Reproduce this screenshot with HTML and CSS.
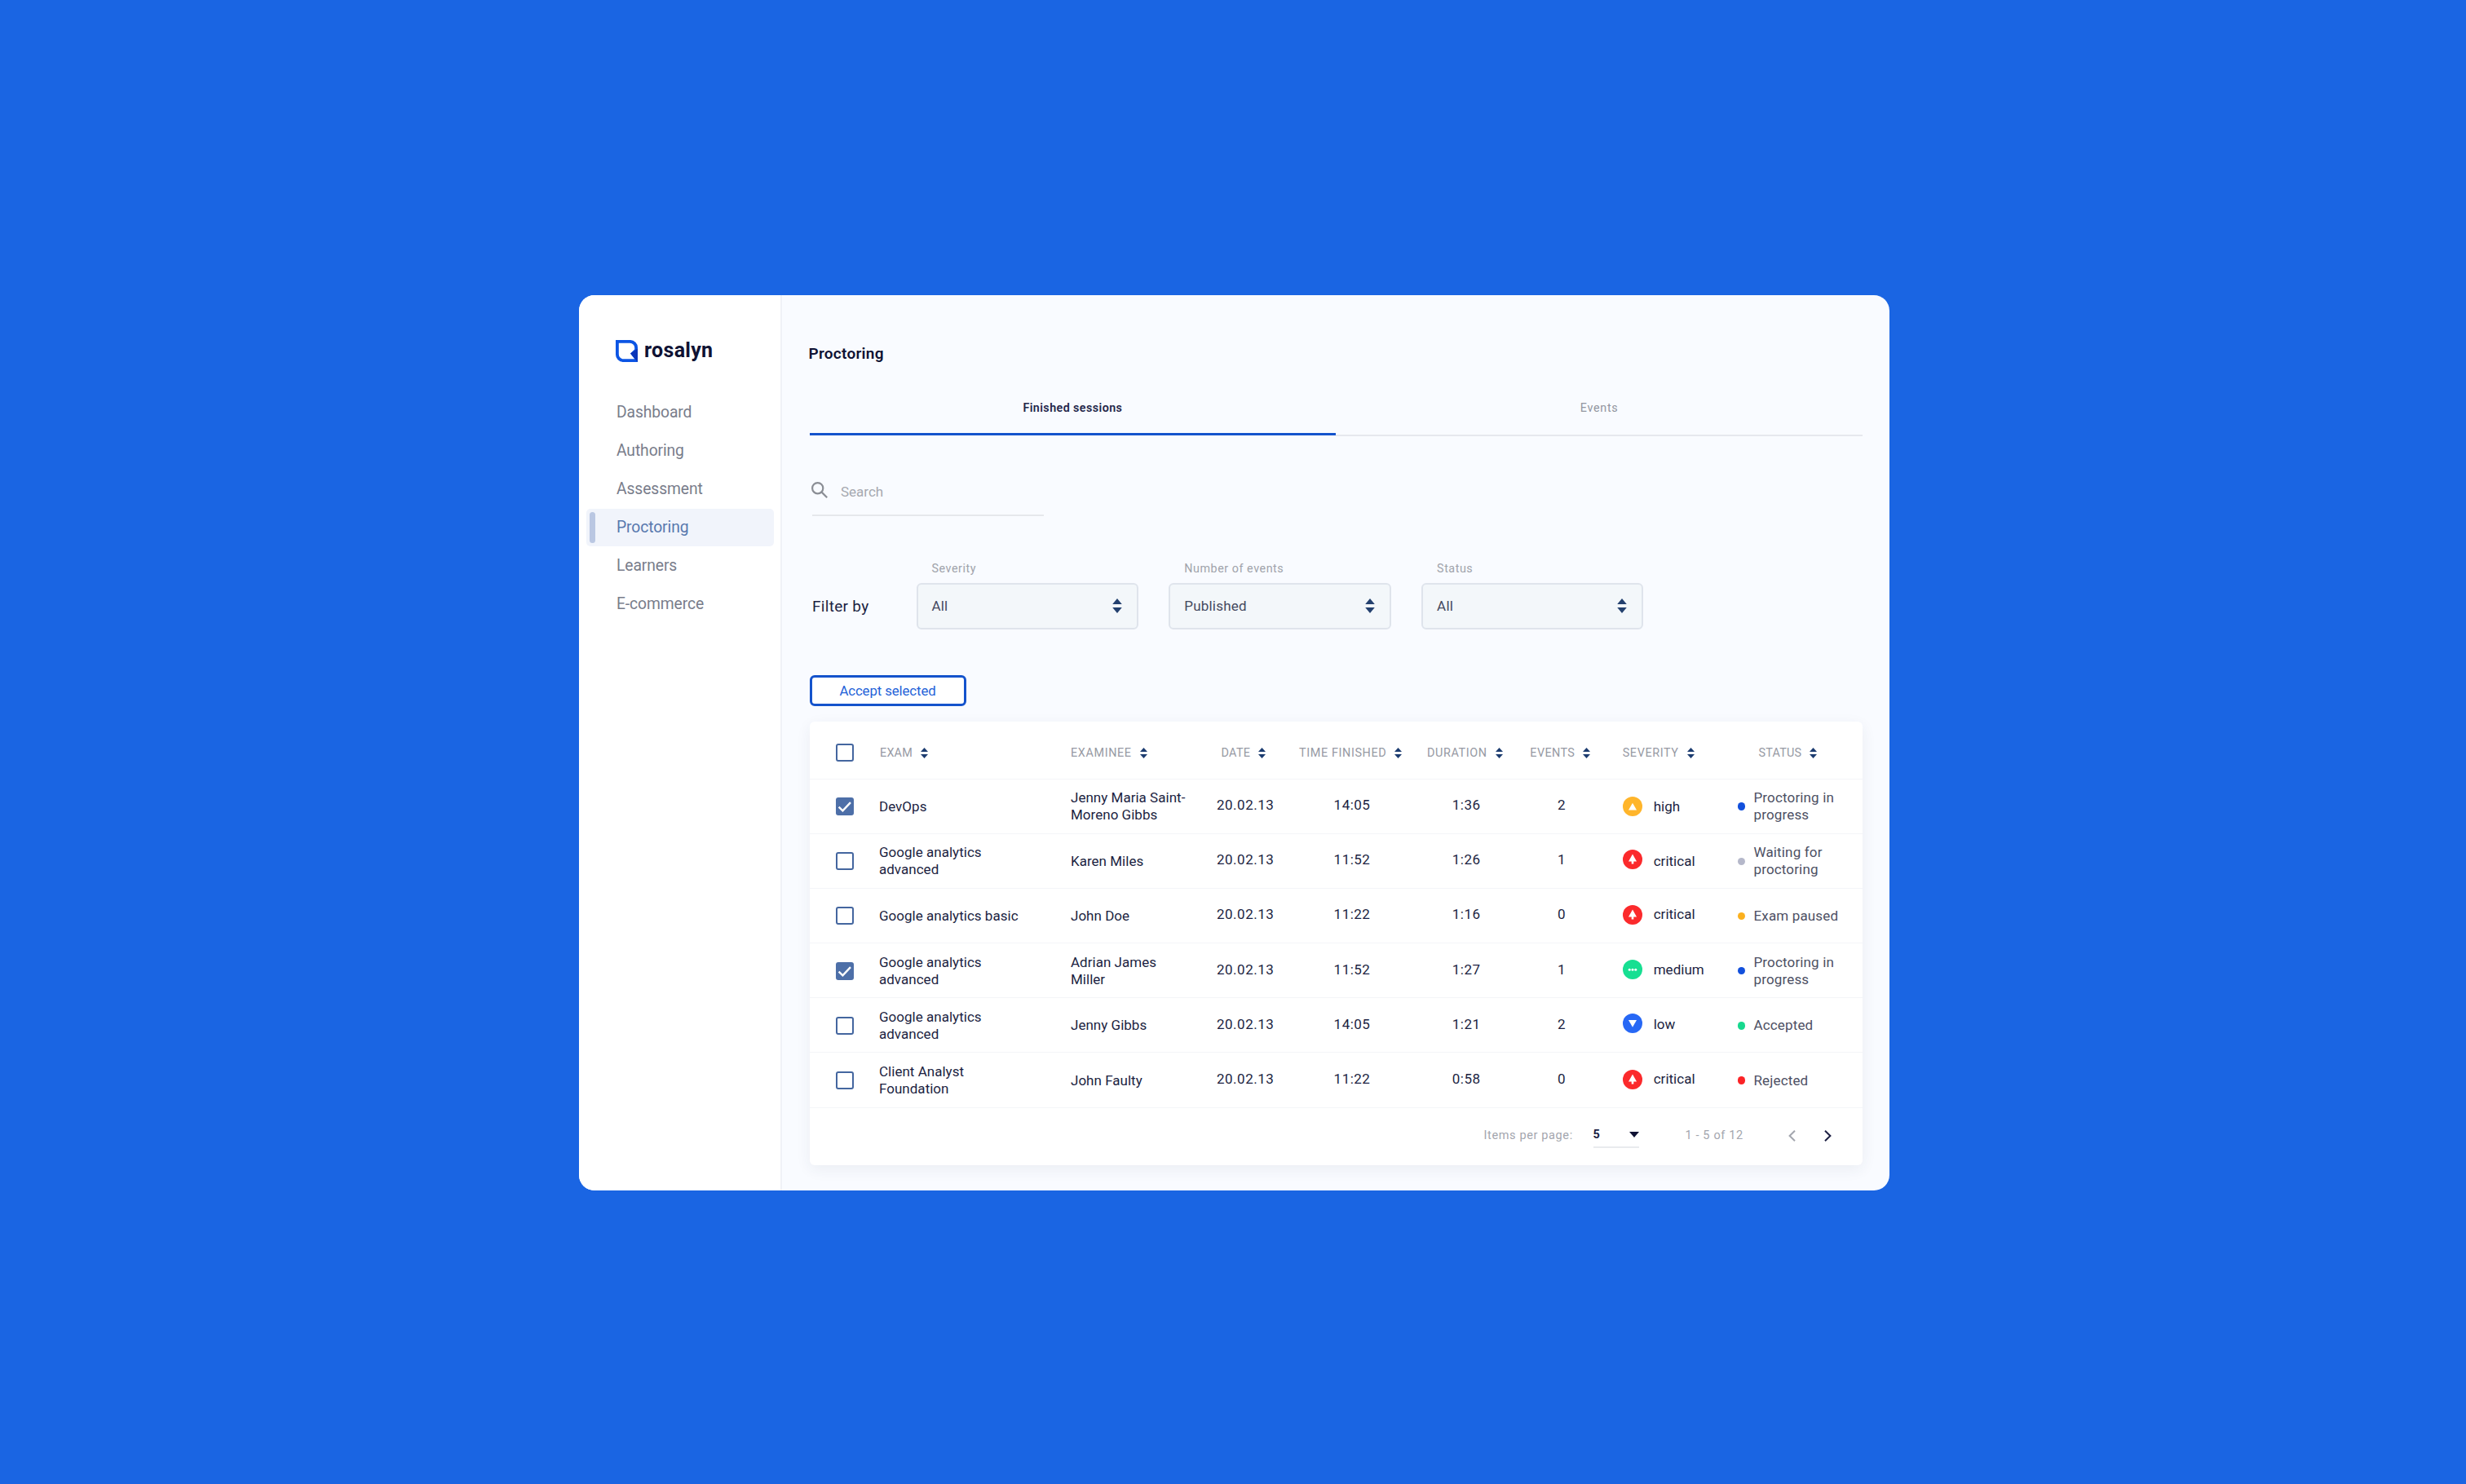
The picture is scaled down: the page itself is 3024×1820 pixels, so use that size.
FILE: index.html
```html
<!DOCTYPE html>
<html lang="en">
<head>
<meta charset="utf-8">
<title>Proctoring - rosalyn</title>
<link rel="stylesheet" href="styles.css">
</head>
<body>
<svg class="defs" width="0" height="0">
  <symbol id="sort" viewBox="0 0 9 13"><path d="M4.5 0 9 5H0zM4.5 13 0 8h9z"/></symbol>
  <symbol id="updown" viewBox="0 0 12 18"><path d="M6 0 11.8 7H.2zM6 18 .2 11h11.6z"/></symbol>
  <symbol id="check" viewBox="0 0 22 22"><path d="M3.6 11.6 8.4 16.3 18 6.2" fill="none" stroke="#fff" stroke-width="2.4"/></symbol>
  <symbol id="high" viewBox="0 0 24 24"><circle cx="12" cy="12" r="12" fill="#ffb52b"/><path d="M12 7.7 17 16.4H7z" fill="#fff"/></symbol>
  <symbol id="critical" viewBox="0 0 24 24"><circle cx="12" cy="12" r="12" fill="#fb2a2c"/><path d="M12 5.6 17 14.6H13.3V17.4H10.7V14.6H7z" fill="#fff"/></symbol>
  <symbol id="medium" viewBox="0 0 24 24"><circle cx="12" cy="12" r="12" fill="#17df92"/><g fill="#fff"><circle cx="8.2" cy="12.2" r="1.5"/><circle cx="12" cy="12.2" r="1.5"/><circle cx="15.8" cy="12.2" r="1.5"/></g></symbol>
  <symbol id="low" viewBox="0 0 24 24"><circle cx="12" cy="12" r="12" fill="#2768f5"/><path d="M7 8H17L12 16.8z" fill="#fff"/></symbol>
</svg>
<div class="window">
  <aside class="sidebar">
    <div class="brand">
      <svg class="logo" viewBox="0 0 27 27"><path fill="#0c55e4" fill-rule="evenodd" d="M0 0H18A9 9 0 0 1 27 9V27H9A9 9 0 0 1 0 18ZM3.8 3.8V17.5A5.7 5.7 0 0 0 9.5 23.2H23.2L18 16.5 23.2 11.5V9.5A5.7 5.7 0 0 0 17.5 3.8Z"/><path d="M27 10.5V27L18 16.5z" fill="#0a35b8"/></svg>
      <span>rosalyn</span>
    </div>
    <nav class="nav">
      <a class="nav-item">Dashboard</a>
      <a class="nav-item">Authoring</a>
      <a class="nav-item">Assessment</a>
      <a class="nav-item active">Proctoring</a>
      <a class="nav-item">Learners</a>
      <a class="nav-item">E-commerce</a>
    </nav>
  </aside>
  <main class="main">
    <h1 class="title">Proctoring</h1>
    <div class="tabs">
      <div class="tab current">Finished sessions</div>
      <div class="tab">Events</div>
    </div>
    <div class="search">
      <svg class="search-icon" viewBox="0 0 20 20"><circle cx="7.7" cy="7.7" r="6.6"/><path d="M12.4 12.4 19.2 19.2"/></svg>
      <span>Search</span>
    </div>
    <div class="filters">
      <div class="filter-title">Filter by</div>
      <div class="filter"><div class="filter-label">Severity</div><div class="select"><span>All</span><svg class="updown"><use href="#updown"/></svg></div></div>
      <div class="filter"><div class="filter-label">Number of events</div><div class="select"><span>Published</span><svg class="updown"><use href="#updown"/></svg></div></div>
      <div class="filter"><div class="filter-label">Status</div><div class="select"><span>All</span><svg class="updown"><use href="#updown"/></svg></div></div>
    </div>
    <div class="accept">Accept selected</div>
    <section class="table">
      <div class="row head">
        <div class="box"></div>
        <div class="th th-exam">EXAM<svg class="sort"><use href="#sort"/></svg></div>
        <div class="th th-examinee">EXAMINEE<svg class="sort"><use href="#sort"/></svg></div>
        <div class="th th-date">DATE<svg class="sort"><use href="#sort"/></svg></div>
        <div class="th">TIME FINISHED<svg class="sort"><use href="#sort"/></svg></div>
        <div class="th">DURATION<svg class="sort"><use href="#sort"/></svg></div>
        <div class="th th-events">EVENTS<svg class="sort"><use href="#sort"/></svg></div>
        <div class="th">SEVERITY<svg class="sort"><use href="#sort"/></svg></div>
        <div class="th th-status">STATUS<svg class="sort"><use href="#sort"/></svg></div>
      </div>
      <div class="row">
        <div class="box checked"><svg><use href="#check"/></svg></div>
        <div>DevOps</div><div>Jenny Maria Saint-<br>Moreno Gibbs</div>
        <div class="num">20.02.13</div><div class="num time">14:05</div><div class="num duration">1:36</div><div class="num events">2</div>
        <div class="severity"><svg class="level"><use href="#high"/></svg><span>high</span></div>
        <div class="status blue">Proctoring in<br>progress</div>
      </div>
      <div class="row">
        <div class="box"></div>
        <div>Google analytics<br>advanced</div><div>Karen Miles</div>
        <div class="num">20.02.13</div><div class="num time">11:52</div><div class="num duration">1:26</div><div class="num events">1</div>
        <div class="severity"><svg class="level"><use href="#critical"/></svg><span>critical</span></div>
        <div class="status gray">Waiting for<br>proctoring</div>
      </div>
      <div class="row">
        <div class="box"></div>
        <div>Google analytics basic</div><div>John Doe</div>
        <div class="num">20.02.13</div><div class="num time">11:22</div><div class="num duration">1:16</div><div class="num events">0</div>
        <div class="severity"><svg class="level"><use href="#critical"/></svg><span>critical</span></div>
        <div class="status amber">Exam paused</div>
      </div>
      <div class="row">
        <div class="box checked"><svg><use href="#check"/></svg></div>
        <div>Google analytics<br>advanced</div><div>Adrian James<br>Miller</div>
        <div class="num">20.02.13</div><div class="num time">11:52</div><div class="num duration">1:27</div><div class="num events">1</div>
        <div class="severity"><svg class="level"><use href="#medium"/></svg><span>medium</span></div>
        <div class="status blue">Proctoring in<br>progress</div>
      </div>
      <div class="row">
        <div class="box"></div>
        <div>Google analytics<br>advanced</div><div>Jenny Gibbs</div>
        <div class="num">20.02.13</div><div class="num time">14:05</div><div class="num duration">1:21</div><div class="num events">2</div>
        <div class="severity"><svg class="level"><use href="#low"/></svg><span>low</span></div>
        <div class="status green">Accepted</div>
      </div>
      <div class="row">
        <div class="box"></div>
        <div>Client Analyst<br>Foundation</div><div>John Faulty</div>
        <div class="num">20.02.13</div><div class="num time">11:22</div><div class="num duration">0:58</div><div class="num events">0</div>
        <div class="severity"><svg class="level"><use href="#critical"/></svg><span>critical</span></div>
        <div class="status red">Rejected</div>
      </div>
      <footer class="pager">
        <span class="pager-label">Items per page:</span>
        <div class="page-size"><span>5</span><svg class="caret" viewBox="0 0 12 7"><path d="M0 0H12L6 7z"/></svg></div>
        <span class="range">1 - 5 of 12</span>
        <svg class="chevron prev" viewBox="0 0 9 14"><path d="M8 .8 1.6 7 8 13.2"/></svg>
        <svg class="chevron" viewBox="0 0 9 14"><path d="M1 .8 7.4 7 1 13.2"/></svg>
      </footer>
    </section>
  </main>
</div>
</body>
</html>
```
FILE: styles.css
```css
* { box-sizing: border-box; }
body {
  margin: 0;
  padding: 362px 0 0 709.5px;
  min-height: 1820px;
  background: #1a65e3;
  font-family: Roboto, "Liberation Sans", sans-serif;
  color: #1c1f42;
}
svg { display: block; flex: none; }
.defs { position: absolute; }

.window {
  display: flex;
  width: 1607px;
  height: 1098px;
  border-radius: 19px;
  overflow: hidden;
  background: #f9fbff;
}

/* Sidebar */
.sidebar {
  flex: none;
  width: 249px;
  background: #fff;
  border-right: 2px solid #f0f2f7;
  padding: 53px 8px 0 9px;
}
.brand {
  display: flex;
  align-items: center;
  gap: 8px;
  height: 31px;
  padding-left: 36.5px;
  font-size: 25px;
  font-weight: 700;
  letter-spacing: .3px;
  line-height: 28px;
  color: #0f1233;
}
.brand span { padding-bottom: 1px; }
.logo { width: 27px; height: 27px; }
.nav { padding-top: 37px; }
.nav-item {
  display: block;
  height: 46px;
  margin-bottom: 1.1px;
  padding-left: 37.5px;
  line-height: 46px;
  font-size: 19.3px;
  letter-spacing: -.1px;
  color: #797d8b;
}
.nav-item.active {
  display: flex;
  padding-left: 4px;
  border-radius: 5px;
  background: #f1f4fb;
  color: #5878ae;
}
.nav-item.active::before {
  content: "";
  width: 7.5px;
  height: 38px;
  margin: 4px 26px 0 0;
  border-radius: 4px;
  background: #bac7e2;
}

/* Main column */
.main { flex: 1; padding: 58.5px 32.5px 0 34px; }
.title {
  margin: 0 0 0 -1px;
  font-size: 19px;
  font-weight: 600;
  letter-spacing: .28px;
  line-height: 26px;
  color: #0f1233;
}
.tabs {
  display: flex;
  align-items: flex-start;
  margin-top: 23.5px;
  height: 65px;
}
.tab {
  flex: 1;
  height: 65px;
  border-bottom: 2px solid #e6e8ee;
  line-height: 60px;
  text-align: center;
  font-size: 14.3px;
  letter-spacing: .7px;
  color: #9296a0;
}
.tab.current {
  height: 64px;
  border-bottom: 3px solid #1453cc;
  font-weight: 600;
  letter-spacing: .42px;
  color: #23264a;
}
.search {
  display: flex;
  align-items: center;
  gap: 16.5px;
  width: 284px;
  height: 57px;
  margin: 40.5px 0 0 3px;
  border-bottom: 2px solid #e6e8ec;
  font-size: 17px;
  color: #a6a9b0;
}
.search-icon {
  width: 20px;
  height: 20px;
  margin: -5px 0 0 -1px;
  fill: none;
  stroke: #8b8e95;
  stroke-width: 2.2;
}
.filters {
  display: flex;
  align-items: flex-end;
  gap: 37.5px;
  margin-top: 54.5px;
}
.filter-title {
  flex: none;
  width: 93.5px;
  padding-left: 3.5px;
  height: 57px;
  line-height: 58px;
  font-size: 19px;
  letter-spacing: .3px;
  white-space: nowrap;
}
.filter { flex: none; width: 272.3px; }
.filter-label {
  padding-left: 19px;
  margin-bottom: 7.5px;
  line-height: 20px;
  font-size: 14.3px;
  letter-spacing: .55px;
  color: #a0a3ab;
}
.select {
  display: flex;
  align-items: center;
  justify-content: space-between;
  height: 57px;
  padding: 0 18px 0 17px;
  border: 2px solid #dfe4ec;
  border-radius: 6px;
  background: #f3f7fa;
  font-size: 17px;
  letter-spacing: .2px;
  color: #454960;
}
.updown { width: 12px; height: 18px; fill: #24416f; }
.accept {
  width: 192px;
  height: 37.5px;
  margin-top: 56.5px;
  border: 3px solid #1453cc;
  border-radius: 6px;
  background: #fff;
  line-height: 32px;
  text-align: center;
  font-size: 16.8px;
  letter-spacing: -.1px;
  color: #2563d8;
}

/* Session table */
.table {
  height: 544px;
  margin-top: 19px;
  border-radius: 6px;
  background: #fff;
  box-shadow: 0 5px 18px rgba(40, 50, 90, .07);
}
.row {
  display: grid;
  grid-template-columns: 53px 235px 179px 101px 157px 126.3px 113.4px 141.3px 1fr;
  align-items: center;
  height: 67.2px;
  padding: 1px 0 0 32.5px;
  border-bottom: 1.5px solid #f4f5f8;
  font-size: 17px;
  line-height: 21px;
  letter-spacing: .02px;
}
.row.head { height: 71px; padding-top: 7px; }
.box {
  width: 22px;
  height: 22px;
  border: 2.5px solid #44669f;
  border-radius: 3px;
}
.box.checked { border: 0; background: #4d6fa8; }
.box.checked svg { width: 22px; height: 22px; }
.th {
  display: flex;
  align-items: center;
  gap: 10px;
  font-size: 14.4px;
  letter-spacing: .62px;
  color: #979aa4;
  white-space: nowrap;
}
.th-exam { padding-left: 1px; letter-spacing: .2px; }
.th-date { padding-left: 5.5px; letter-spacing: .3px; }
.th-events { letter-spacing: .4px; }
.th-status { padding-left: 25.5px; letter-spacing: .2px; }
.sort { width: 9px; height: 13px; fill: #1c3c70; }
.num { padding-bottom: 3px; letter-spacing: .5px; }
.time { padding-right: 27px; text-align: center; }
.duration { padding-right: 29.9px; text-align: center; }
.events { padding-right: 36px; text-align: center; }
.severity { display: flex; align-items: center; gap: 14px; }
.level { width: 24px; height: 24px; }
.row:nth-child(3) .level { margin-top: -4px; }
.row:nth-child(4) .level { margin-top: -2px; }
.row:nth-child(5) .level { margin-top: -4px; }
.row:nth-child(6) .level { margin-top: -6px; }
.row:nth-child(7) .level { margin-top: -3px; }
.row:nth-child(n+4) .severity span { padding-bottom: 3px; }
.status {
  display: flex;
  align-items: center;
  gap: 10px;
  letter-spacing: .15px;
  color: #4d5064;
}
.status::before {
  content: "";
  width: 9.5px;
  height: 9.5px;
  border-radius: 50%;
  background: currentColor;
}
.status.blue::before { background: #1250dc; }
.status.gray::before { background: #b5b8ca; }
.status.amber::before { background: #fbb01e; }
.status.green::before { background: #17d88e; }
.status.red::before { background: #fb2326; }

.pager {
  display: flex;
  align-items: center;
  height: 70px;
  padding: 0 0 1.5px 827px;
  font-size: 14.5px;
  letter-spacing: .63px;
  color: #a3a6ae;
}
.pager-label { width: 134px; }
.page-size {
  display: flex;
  align-items: center;
  justify-content: space-between;
  width: 56px;
  height: 31px;
  margin-right: 57px;
  border-bottom: 2px solid #e9ebee;
  font-weight: 700;
  color: #1c1f42;
}
.caret { width: 12px; height: 7px; fill: #0f1233; }
.range { width: 126px; }
.chevron {
  width: 9px;
  height: 14px;
  fill: none;
  stroke: #1c1f42;
  stroke-width: 2;
}
.chevron.prev { stroke: #a3a6ae; margin-right: 35px; }
```
